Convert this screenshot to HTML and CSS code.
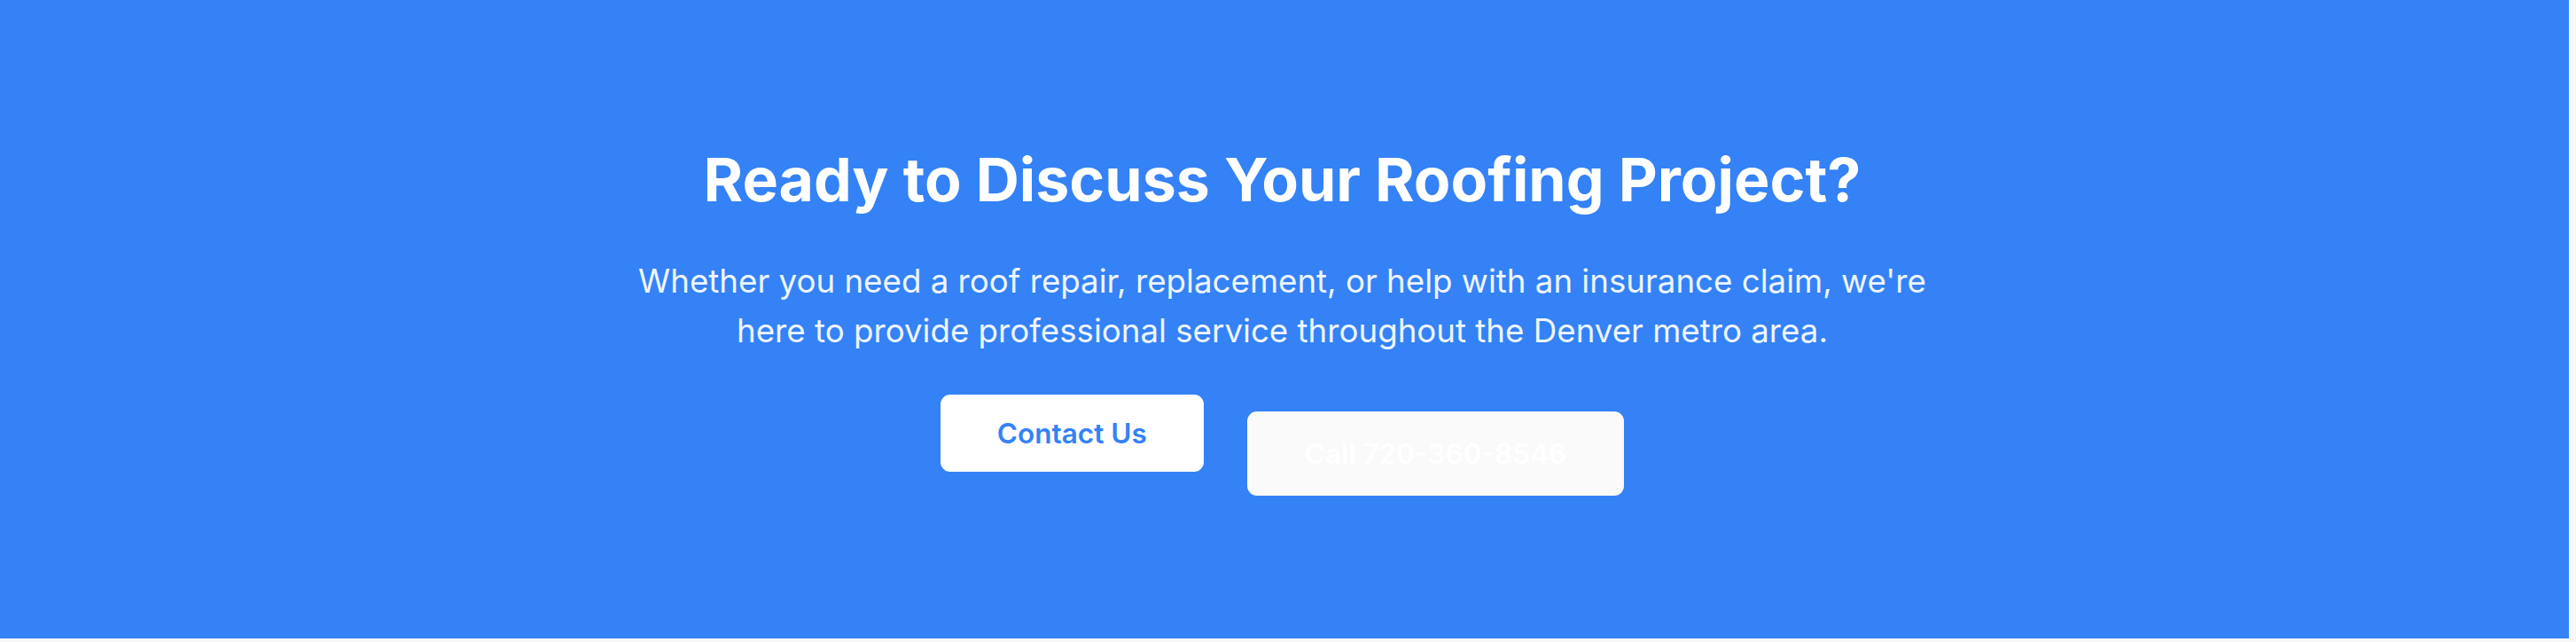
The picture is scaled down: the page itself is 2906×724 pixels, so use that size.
FILE: index.html
```html
<!DOCTYPE html>
<html lang="en">
<head>
<meta charset="utf-8">
<title>Ready to Discuss Your Roofing Project?</title>
<link rel="stylesheet" href="styles.css">
</head>
<body>
<section class="cta">
  <h2 class="cta-title">Ready to Discuss Your Roofing Project?</h2>
  <p class="cta-text">Whether you need a roof repair, replacement, or help with an insurance claim, we're here to provide professional service throughout the Denver metro area.</p>
  <div class="cta-actions">
    <a class="btn btn-primary" href="#contact">Contact Us</a>
    <a class="btn btn-call" href="#call">Call 720-360-8546</a>
  </div>
</section>
</body>
</html>
```

FILE: styles.css
```css
html, body {
  margin: 0;
  padding: 0;
}
body {
  background: #f7f7f7;
  font-family: Inter, "Noto Sans", "Liberation Sans", sans-serif;
  width: 2906px;
  height: 724px;
  overflow: hidden;
}
.cta {
  box-sizing: border-box;
  width: 2898px;
  height: 720px;
  background: #3482f6;
  display: flex;
  flex-direction: column;
  align-items: center;
  padding: 162px 5px 0 0;
}
.cta-title {
  margin: 0;
  font-size: 68px;
  line-height: 80px;
  font-weight: 700;
  color: #ffffff;
}
.cta-text {
  margin: 47px 0 0;
  width: 1470px;
  text-align: center;
  font-size: 36.7px;
  line-height: 55.5px;
  color: #eef5ff;
}
.cta-actions {
  margin-top: 45px;
  display: flex;
  align-items: flex-start;
  gap: 49px;
}
.btn {
  display: block;
  text-decoration: none;
  font-size: 31.5px;
  line-height: 48px;
  font-weight: 600;
  border-radius: 11px;
}
.btn-primary {
  background: #ffffff;
  color: #3482f6;
  padding: 19.5px 64px;
}
.btn-call {
  margin-top: 19px;
  background: #fafafa;
  color: #ffffff;
  padding: 23.5px 65px;
}
```
